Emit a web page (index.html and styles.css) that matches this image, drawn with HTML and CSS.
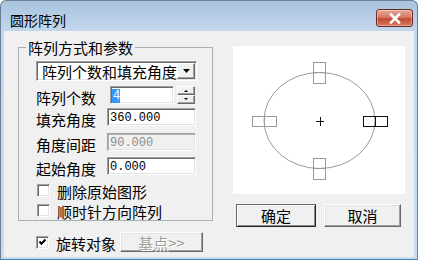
FILE: index.html
```html
<!DOCTYPE html>
<html>
<head>
<meta charset="utf-8">
<link rel="stylesheet" href="styles.css">
</head>
<body>
<div class="window">
  <div class="titlebar">
    <span class="title">圆形阵列</span>
    <div class="close">
      <svg width="14" height="11" viewBox="0 0 14 11"><path d="M3 1.5 L11 9.5 M11 1.5 L3 9.5" stroke="#fff" stroke-width="2.6" stroke-linecap="square"/></svg>
    </div>
  </div>
  <div class="client">
    <div class="left">
      <fieldset class="group">
        <legend>阵列方式和参数</legend>
        <div class="gbody">
          <div class="combo">
            <span class="combo-text">阵列个数和填充角度</span>
            <span class="drop"><svg width="15" height="14" viewBox="0 0 15 14"><path d="M4 5 H11 L7.5 9 Z" fill="#000"/></svg></span>
          </div>
          <div class="row">
            <span class="lbl">阵列个数</span>
            <div class="edit spin-edit"><span class="sel">4</span></div>
            <div class="spin">
              <div class="sbtn"><svg width="16" height="7" viewBox="0 0 16 7"><path d="M6 5 H10 L8 3 Z" fill="#000"/></svg></div>
              <div class="sbtn"><svg width="16" height="7" viewBox="0 0 16 7"><path d="M6 2 H10 L8 4 Z" fill="#000"/></svg></div>
            </div>
          </div>
          <div class="row">
            <span class="lbl">填充角度</span>
            <div class="edit">360.000</div>
          </div>
          <div class="row">
            <span class="lbl">角度间距</span>
            <div class="edit disabled">90.000</div>
          </div>
          <div class="row">
            <span class="lbl">起始角度</span>
            <div class="edit">0.000</div>
          </div>
          <div class="check">
            <span class="box"></span><span class="ctext">删除原始图形</span>
          </div>
          <div class="check">
            <span class="box"></span><span class="ctext">顺时针方向阵列</span>
          </div>
        </div>
      </fieldset>
      <div class="bottom-row">
        <div class="check plain">
          <span class="box"><svg width="9" height="9" viewBox="0 0 9 9"><path d="M1.5 3.5 L3.5 5.8 L7.5 1.5" stroke="#000" stroke-width="2" fill="none"/></svg></span><span class="ctext">旋转对象</span>
        </div>
        <div class="btn off">基点&gt;&gt;</div>
      </div>
    </div>
    <div class="right">
      <div class="preview">
        <svg width="172" height="148" viewBox="0 0 172 148">
          <ellipse cx="86.5" cy="74.5" rx="55.5" ry="48" fill="none" stroke="#9a9a9a"/>
          <g fill="none" stroke="#9a9a9a">
            <rect x="80.5" y="16.5" width="12" height="21"/>
            <path d="M80.5 26.5 H92.5"/>
            <rect x="80.5" y="112.5" width="12" height="21"/>
            <path d="M80.5 122.5 H92.5"/>
            <rect x="19.5" y="70.5" width="24" height="10"/>
            <path d="M31.5 70.5 V80.5"/>
          </g>
          <g fill="none" stroke="#111">
            <rect x="130.5" y="70.5" width="24" height="10"/>
            <path d="M142.5 70.5 V80.5"/>
            <path d="M83 75.5 H91 M87.5 71 V80"/>
          </g>
        </svg>
      </div>
      <div class="buttons">
        <div class="btn default">确定</div>
        <div class="btn">取消</div>
      </div>
    </div>
  </div>
</div>
</body>
</html>
```
FILE: styles.css
```css
* { box-sizing: border-box; }
body {
  margin: 0;
  background: #fff;
  font-family: "Noto Sans CJK SC", "Noto Sans", sans-serif;
  font-size: 15px;
  color: #000;
}
.window {
  width: 418px;
  height: 260px;
  border: 1px solid #6a7f95;
  border-bottom-color: #3d7fb8;
  border-radius: 6px 6px 0 0;
  background: linear-gradient(#a9c3de 0px, #c3d7ec 30px, #cbdcee 100%);
  display: flex;
  flex-direction: column;
  overflow: hidden;
}
.titlebar {
  height: 30px;
  flex: none;
  display: flex;
  justify-content: space-between;
  align-items: flex-start;
  padding: 0 4px 0 9px;
}
.title {
  font-size: 14px;
  line-height: 14px;
  margin-top: 12px;
  color: #000;
}
.close {
  width: 37px;
  height: 18px;
  margin-top: 8px;
  border: 1px solid #6e2a22;
  border-radius: 3px;
  background: linear-gradient(#e6a898 0%, #d27a66 45%, #c04a34 55%, #d6765e 100%);
  display: flex;
  align-items: center;
  justify-content: center;
  box-shadow: inset 0 0 0 1px rgba(255, 255, 255, 0.35);
}
.client {
  flex: 1;
  margin: 0 3px 2px 3px;
  background: #f0f0f0;
  display: flex;
  padding-top: 9px;
}
.left {
  margin-left: 14px;
  width: 195px;
  display: flex;
  flex-direction: column;
}
.group {
  margin: 0;
  padding: 0;
  width: 195px;
  min-width: 0;
  border: 1px solid #a9aeb3;
}
.group legend {
  margin-left: 7px;
  padding: 0 2px;
  font-size: 15px;
  line-height: 15px;
}
.gbody {
  padding: 6px 0 0 17px;
  display: flex;
  flex-direction: column;
}
.combo {
  width: 161px;
  height: 20px;
  border: 1px solid;
  border-color: #a0a0a0 #fff #fff #a0a0a0;
  box-shadow: inset 1px 1px #696969, inset -1px -1px #e3e3e3;
  background: #fff;
  display: flex;
  align-items: center;
  justify-content: space-between;
  padding: 0 1px 0 5px;
}
.combo-text {
  font-size: 15px;
  line-height: 15px;
}
.drop {
  width: 18px;
  height: 16px;
  background: #f0f0f0;
  border: 1px solid;
  border-color: #fff #696969 #696969 #fff;
  box-shadow: inset -1px -1px #a0a0a0;
  display: flex;
  align-items: center;
  justify-content: center;
}
.row {
  height: 18px;
  display: flex;
  align-items: flex-start;
}
.gbody .row:nth-child(2) { margin-top: 5px; }
.gbody .row:nth-child(3) { margin-top: 4px; }
.gbody .row:nth-child(4) { margin-top: 7px; }
.gbody .row:nth-child(5) { margin-top: 6px; }
.lbl {
  width: 60px;
  font-size: 15px;
  line-height: 15px;
  margin-top: 4px;
  white-space: nowrap;
}
.edit {
  margin-left: 11px;
  width: 89px;
  height: 18px;
  border: 1px solid;
  border-color: #a0a0a0 #fff #fff #a0a0a0;
  box-shadow: inset 1px 1px #696969, inset -1px -1px #e3e3e3;
  background: #fff;
  font-family: "Liberation Mono", "DejaVu Sans Mono", monospace;
  font-size: 12px;
  line-height: 16px;
  padding: 1px 0 0 2px;
}
.edit.disabled {
  background: #f0f0f0;
  color: #8d8d8d;
  box-shadow: inset 1px 1px #b0b0b0, inset -1px -1px #e3e3e3;
}
.spin-edit {
  margin-left: 14px;
  width: 64px;
  padding: 1px 0 0 1px;
}
.sel {
  display: inline-block;
  background: #3399ff;
  color: #fff;
  height: 14px;
  line-height: 14px;
  padding: 0 0 0 1px;
  width: 8px;
}
.spin {
  margin-left: 3px;
  width: 18px;
  height: 18px;
  display: flex;
  flex-direction: column;
}
.sbtn {
  flex: 1;
  background: #f0f0f0;
  border: 1px solid;
  border-color: #fff #696969 #696969 #fff;
  box-shadow: inset -1px -1px #a0a0a0;
  display: flex;
  align-items: center;
  justify-content: center;
  overflow: hidden;
}
.check {
  height: 20px;
  display: flex;
  align-items: center;
}
.gbody .check:nth-child(6) { margin-top: 5px; }
.box {
  width: 13px;
  height: 13px;
  flex: none;
  margin-left: 1px;
  background: #fff;
  border: 1px solid;
  border-color: #a0a0a0 #fff #fff #a0a0a0;
  box-shadow: inset 1px 1px #696969, inset -1px -1px #e3e3e3;
  display: flex;
  align-items: center;
  justify-content: center;
}
.ctext {
  margin-left: 7px;
  font-size: 15px;
  line-height: 15px;
  margin-top: 2px;
}
.bottom-row {
  margin-top: 11px;
  padding-left: 17px;
  display: flex;
  align-items: center;
  height: 20px;
}
.btn {
  height: 23px;
  width: 80px;
  background: #f0f0f0;
  border: 1px solid;
  border-color: #fff #696969 #696969 #fff;
  box-shadow: inset -1px -1px #a0a0a0, inset 1px 1px #e3e3e3;
  display: flex;
  align-items: center;
  justify-content: center;
  font-size: 15px;
  line-height: 15px;
}
.btn.off {
  margin-left: 4px;
  width: 83px;
  height: 20px;
  color: #a0a0a0;
  text-shadow: 1px 1px #fff;
}
.btn.default {
  border-color: #6a6a6a #222 #222 #6a6a6a;
  box-shadow: inset 1px 1px #fff, inset -1px -1px #8a8a8a;
}
.right {
  margin-left: 20px;
  display: flex;
  flex-direction: column;
}
.preview {
  margin-top: 6px;
  width: 172px;
  height: 148px;
  background: #fff;
}
.preview svg { display: block; }
.buttons {
  margin-top: 10px;
  margin-left: 3px;
  display: flex;
  gap: 8px;
}
.buttons .btn:last-child { width: 77px; }
```
